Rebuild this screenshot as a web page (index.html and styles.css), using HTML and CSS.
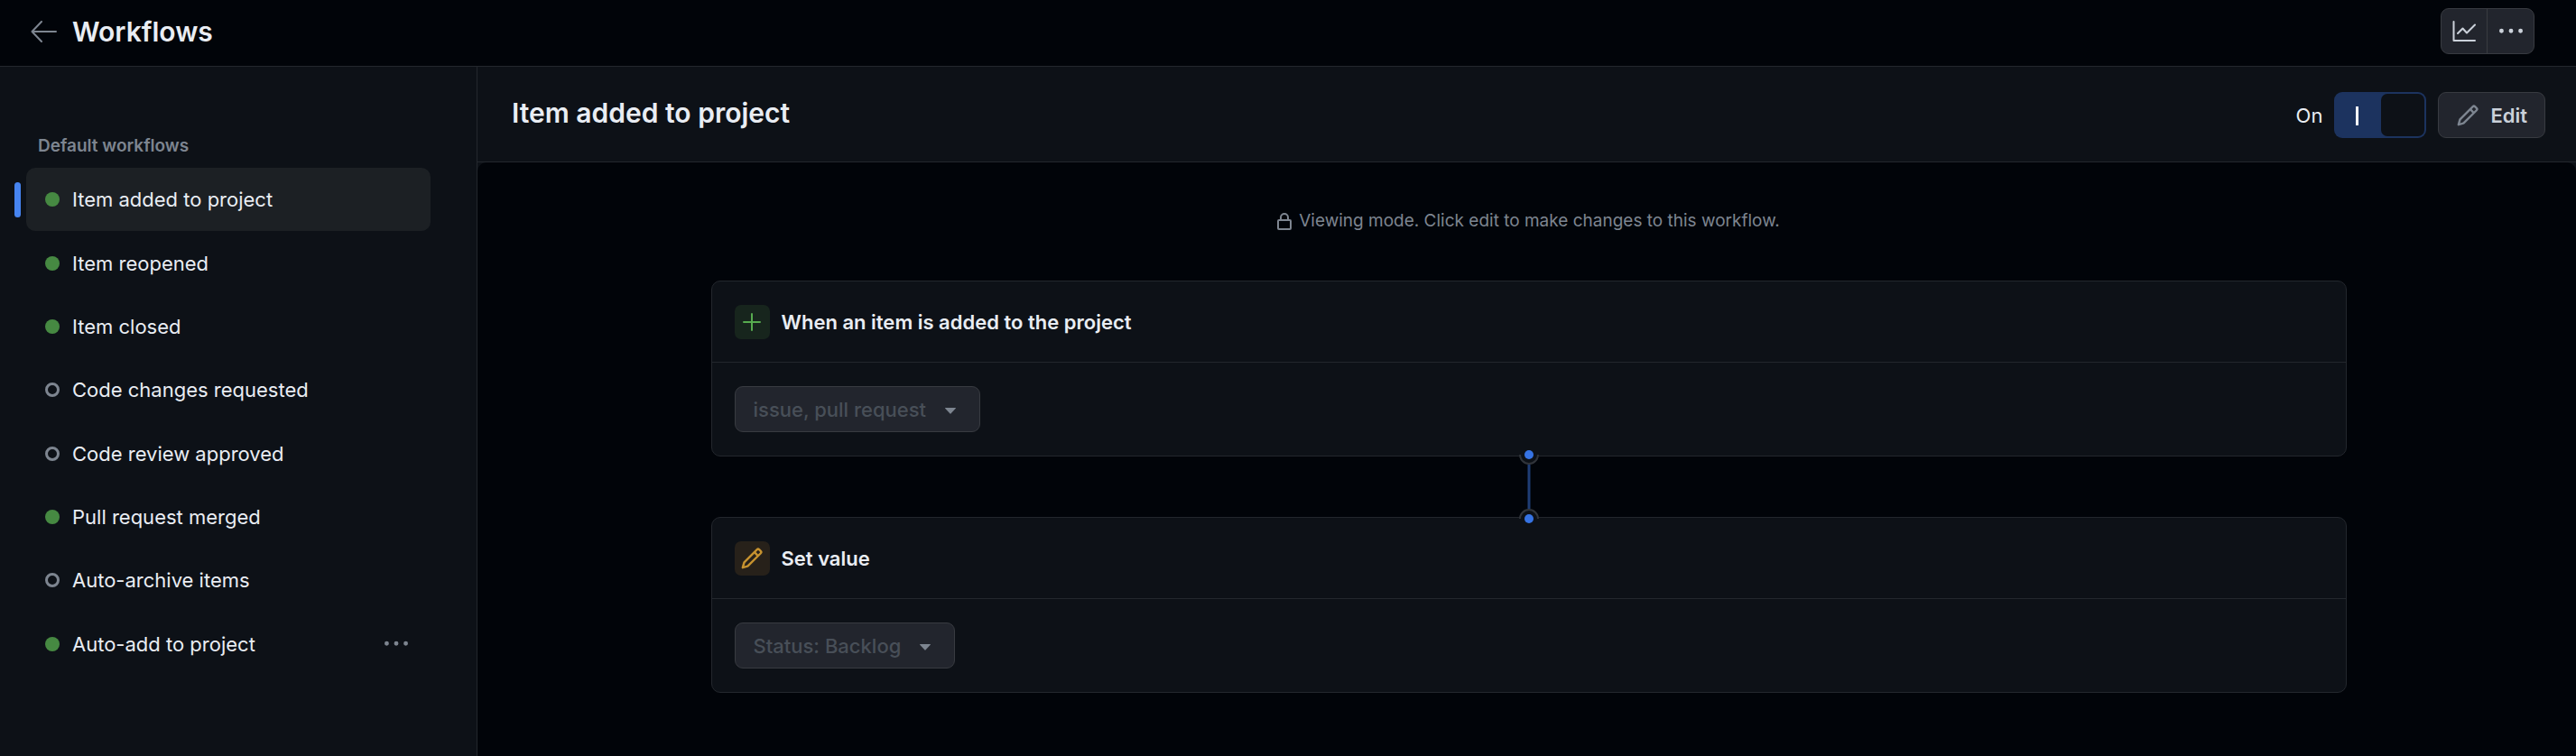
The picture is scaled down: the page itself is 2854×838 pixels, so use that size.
FILE: index.html
```html
<!DOCTYPE html>
<html lang="en">
<head>
<meta charset="utf-8">
<meta name="viewport" content="width=device-width, initial-scale=1">
<title>Workflows</title>
<link rel="stylesheet" href="styles.css">
</head>
<body>
<svg width="0" height="0" class="sprite" aria-hidden="true">
  <symbol id="pencil" viewBox="0 0 16 16"><path d="M11.013 1.427a1.75 1.75 0 0 1 2.474 0l1.086 1.086a1.75 1.75 0 0 1 0 2.474l-8.61 8.61c-.21.21-.47.364-.756.445l-3.251.93a.75.75 0 0 1-.927-.928l.929-3.25c.081-.286.235-.547.445-.758l8.61-8.61Zm.176 4.823L9.75 4.81l-6.286 6.287a.253.253 0 0 0-.064.108l-.558 1.953 1.953-.558a.253.253 0 0 0 .108-.064Zm1.238-3.763a.25.25 0 0 0-.354 0L10.811 3.75l1.439 1.44 1.263-1.263a.25.25 0 0 0 0-.354Z"/></symbol>
  <symbol id="dots" viewBox="0 0 16 16"><path d="M8 9a1.5 1.5 0 1 0 0-3 1.5 1.5 0 0 0 0 3ZM1.5 9a1.5 1.5 0 1 0 0-3 1.5 1.5 0 0 0 0 3Zm13 0a1.5 1.5 0 1 0 0-3 1.5 1.5 0 0 0 0 3Z"/></symbol>
  <symbol id="caret" viewBox="0 0 12 7"><path d="M.5 0h11a.4.4 0 0 1 .3.7L6.4 6.5a.5.5 0 0 1-.8 0L.2.7A.4.4 0 0 1 .5 0Z"/></symbol>
</svg>

<header class="topbar">
  <a class="back" href="#" aria-label="Back to project">
    <svg viewBox="0 0 29 24" fill="none" stroke="currentColor" stroke-width="2" stroke-linecap="round" stroke-linejoin="round"><path d="M12 1 1.500 12 12 23M1.500 12H28"/></svg>
  </a>
  <h1 class="title">Workflows</h1>
  <div class="button-group">
    <button type="button" class="icon-button" aria-label="Insights">
      <svg class="chart" viewBox="0 0 26 24" fill="none" stroke="currentColor" stroke-width="2" stroke-linecap="round" stroke-linejoin="round"><path d="M1.500 1V22H25M6 14 11.500 8.500 16 13.500 25 4.500"/></svg>
    </button>
    <button type="button" class="icon-button" aria-label="More options"><svg class="dots"><use href="#dots"/></svg></button>
  </div>
</header>

<div class="layout">
  <nav class="sidebar" aria-labelledby="nav-title">
    <h2 class="nav-title" id="nav-title">Default workflows</h2>
    <ul class="nav-list">
      <li class="nav-item selected"><a class="nav-link" href="#" aria-current="page"><span class="dot on"></span>Item added to project</a></li>
      <li class="nav-item"><a class="nav-link" href="#"><span class="dot on"></span>Item reopened</a></li>
      <li class="nav-item"><a class="nav-link" href="#"><span class="dot on"></span>Item closed</a></li>
      <li class="nav-item"><a class="nav-link" href="#"><span class="dot"></span>Code changes requested</a></li>
      <li class="nav-item"><a class="nav-link" href="#"><span class="dot"></span>Code review approved</a></li>
      <li class="nav-item"><a class="nav-link" href="#"><span class="dot on"></span>Pull request merged</a></li>
      <li class="nav-item"><a class="nav-link" href="#"><span class="dot"></span>Auto-archive items</a></li>
      <li class="nav-item"><a class="nav-link" href="#"><span class="dot on"></span>Auto-add to project</a><button type="button" class="row-menu" aria-label="Workflow options"><svg class="dots"><use href="#dots"/></svg></button></li>
    </ul>
  </nav>

  <main class="main">
    <div class="main-header">
      <h2 class="title main-title">Item added to project</h2>
      <div class="controls">
        <label class="toggle-label" for="enabled">On</label>
        <input class="toggle" id="enabled" type="checkbox" role="switch" checked>
        <button type="button" class="edit"><svg class="pencil"><use href="#pencil"/></svg>Edit</button>
      </div>
    </div>

    <div class="canvas">
      <p class="notice">
        <svg class="lock" viewBox="0 0 16 19" fill="none" stroke="currentColor" stroke-width="2"><rect x="1" y="8" width="14" height="10" rx="1"/><path d="M4 8V5a4 4 0 0 1 8 0v3"/></svg>
        Viewing mode. Click edit to make changes to this workflow.
      </p>

      <section class="card">
        <div class="card-head">
          <span class="badge green"><svg class="plus" viewBox="0 0 20 20" fill="none" stroke="currentColor" stroke-width="2" stroke-linecap="round"><path d="M10 1V19M1 10H19"/></svg></span>
          <h3 class="card-title"><label for="trigger">When an item is added to the project</label></h3>
        </div>
        <div class="card-body">
          <div class="picker">
            <select class="select" id="trigger" disabled><option>issue, pull request</option></select>
            <svg class="caret"><use href="#caret"/></svg>
          </div>
        </div>
      </section>

      <svg class="connector" viewBox="0 0 24 85" fill="none" aria-hidden="true">
        <path d="M1 7a11 11 0 0 0 22 0Z" fill="#0d1117"/>
        <path d="M1 78a11 11 0 0 1 22 0Z" fill="#0d1117"/>
        <path d="M2 7a10 10 0 0 0 20 0M2 78a10 10 0 0 1 20 0" stroke="#30343a" stroke-width="2"/>
        <path d="M12 18V67" stroke="#1f3d75" stroke-width="3"/>
        <circle cx="12" cy="7" r="5" fill="#3673e3"/>
        <circle cx="12" cy="78" r="5" fill="#3673e3"/>
      </svg>

      <section class="card">
        <div class="card-head">
          <span class="badge amber"><svg class="pencil"><use href="#pencil"/></svg></span>
          <h3 class="card-title"><label for="status">Set value</label></h3>
        </div>
        <div class="card-body">
          <div class="picker">
            <select class="select" id="status" disabled><option>Status: Backlog</option></select>
            <svg class="caret"><use href="#caret"/></svg>
          </div>
        </div>
      </section>
    </div>
  </main>
</div>
</body>
</html>
```

FILE: styles.css
```css
:root {
  --canvas: #010409;
  --panel: #0d1117;
  --line: #23272d;
  --control: #22252d;
  --control-line: #383b41;
  --text: #e9edf3;
  --muted: #7d8590;
}

* {
  box-sizing: border-box;
}

body {
  display: flex;
  flex-direction: column;
  min-height: 100vh;
  margin: 0;
  background: var(--canvas);
  color: var(--text);
  font-family: Inter, "Liberation Sans", sans-serif;
  font-size: 22px;
  line-height: 32px;
}

h1, h2, h3, p, ul {
  margin: 0;
  padding: 0;
}

button, select {
  font: inherit;
  cursor: pointer;
}

svg {
  display: block;
  flex: none;
}

.sprite {
  position: absolute;
}

.title {
  font-size: 30px;
  font-weight: 600;
  line-height: 40px;
}

.topbar {
  display: flex;
  flex: none;
  align-items: center;
  height: 74px;
  padding: 0 46px 4px 34px;
  border-bottom: 1px solid var(--line);
}

.back {
  margin-right: 17px;
  color: var(--muted);
}

.back svg {
  width: 29px;
  height: 24px;
}

.button-group {
  display: flex;
  height: 51px;
  margin-left: auto;
  border: 1px solid var(--control-line);
  border-radius: 9px;
  background: var(--control);
}

.icon-button {
  display: grid;
  place-items: center;
  width: 50px;
  padding: 0;
  border: 0;
  background: none;
  color: #cbd1da;
}

.icon-button + .icon-button {
  width: 52px;
  border-left: 1px solid var(--control-line);
}

.chart {
  width: 26px;
  height: 24px;
}

.dots {
  width: 26px;
  height: 26px;
  fill: currentColor;
}

.layout {
  display: flex;
  flex: 1;
}

.sidebar {
  flex: none;
  width: 529px;
  padding: 72px 51px 40px 29px;
  border-right: 1px solid var(--line);
  background: var(--panel);
}

.nav-title {
  padding-left: 13px;
  color: var(--muted);
  font-size: 19px;
  font-weight: 600;
}

.nav-list {
  display: flex;
  flex-direction: column;
  height: 563px;
  margin-top: 8px;
  list-style: none;
}

.nav-item {
  position: relative;
  display: flex;
  flex: 1;
  align-items: center;
  padding-right: 25px;
  border-radius: 10px;
}

.selected {
  background: #1c2024;
}

.selected::before {
  content: "";
  position: absolute;
  left: -13px;
  width: 7px;
  height: 39px;
  border-radius: 4px;
  background: #4684f0;
}

.nav-link {
  display: flex;
  flex: 1;
  align-items: center;
  gap: 14px;
  padding-left: 21px;
  color: inherit;
  text-decoration: none;
}

.dot {
  width: 16px;
  height: 16px;
  border: 3px solid var(--muted);
  border-radius: 50%;
}

.dot.on {
  border: 0;
  background: #468942;
}

.row-menu {
  padding: 0;
  border: 0;
  background: none;
  color: var(--muted);
}

.main {
  display: flex;
  flex: 1;
  flex-direction: column;
  min-width: 0;
  background: var(--panel);
}

.main-header {
  display: flex;
  align-items: center;
  justify-content: space-between;
  height: 106px;
  padding: 2px 34px 0 38px;
  border-bottom: 1px solid var(--line);
}

.main-title {
  padding-bottom: 6px;
}

.controls {
  display: flex;
  align-items: center;
  gap: 13px;
}

.toggle {
  position: relative;
  width: 102px;
  height: 51px;
  margin: 0;
  border-radius: 9px;
  background: #1c335f;
  appearance: none;
  cursor: pointer;
}

.toggle::before {
  content: "";
  position: absolute;
  top: 16px;
  left: 24px;
  width: 3px;
  height: 21px;
  background: #fff;
}

.toggle::after {
  content: "";
  position: absolute;
  top: 2px;
  right: 2px;
  width: 48px;
  height: 47px;
  border-radius: 7px;
  background: var(--panel);
}

.edit {
  display: flex;
  align-items: center;
  gap: 12px;
  height: 51px;
  padding: 0 19px;
  border: 1px solid var(--control-line);
  border-radius: 9px;
  background: var(--control);
  color: #cbd1da;
  font-weight: 600;
}

.pencil {
  width: 26px;
  height: 26px;
  fill: currentColor;
}

.edit .pencil {
  color: var(--muted);
}

.canvas {
  display: flex;
  flex: 1;
  flex-direction: column;
  align-items: center;
  padding: 49px 40px 40px 44px;
  border-radius: 10px 10px 0 0;
  background: var(--canvas);
}

.notice {
  display: flex;
  align-items: center;
  gap: 8px;
  margin-bottom: 50px;
  color: var(--muted);
  font-size: 19px;
}

.lock {
  width: 16px;
  height: 19px;
}

.card {
  width: 100%;
  max-width: 1812px;
  border: 1px solid var(--line);
  border-radius: 10px;
  background: var(--panel);
}

.card-head {
  display: flex;
  align-items: center;
  gap: 13px;
  height: 89px;
  padding: 0 25px;
}

.card-title {
  font-size: 22px;
  font-weight: 600;
}

.badge {
  display: grid;
  place-items: center;
  width: 39px;
  height: 38px;
  border-radius: 7px;
}

.green {
  background: #17251d;
  color: #57ab4f;
}

.amber {
  background: #27211a;
  color: #c6922f;
}

.plus {
  width: 20px;
  height: 20px;
}

.card-body {
  display: flex;
  padding: 26px 25px;
  border-top: 1px solid var(--line);
}

.picker {
  position: relative;
}

.select {
  display: block;
  height: 51px;
  padding: 0 58px 0 20px;
  border: 1px solid var(--control-line);
  border-radius: 9px;
  background: var(--control);
  color: #484f58;
  font-weight: 500;
  opacity: 1;
  appearance: none;
}

.caret {
  position: absolute;
  top: 24px;
  right: 27px;
  width: 12px;
  height: 7px;
  fill: var(--muted);
  pointer-events: none;
}

.connector {
  position: relative;
  width: 24px;
  height: 85px;
  margin: -9px 0;
}
```
